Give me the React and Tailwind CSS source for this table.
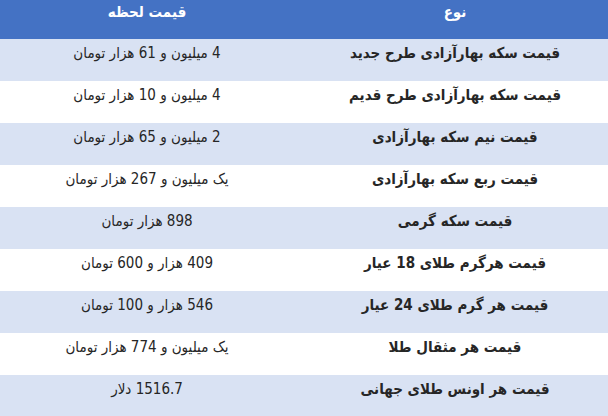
const rows = [
  ['قیمت سکه بهارآزادی طرح جدید', '4 میلیون و 61 هزار تومان'],
  ['قیمت سکه بهارآزادی طرح قدیم', '4 میلیون و 10 هزار تومان'],
  ['قیمت نیم سکه بهارآزادی', '2 میلیون و 65 هزار تومان'],
  ['قیمت ربع سکه بهارآزادی', 'یک میلیون و 267 هزار تومان'],
  ['قیمت سکه گرمی', '898 هزار تومان'],
  ['قیمت هرگرم طلای 18 عیار', '409 هزار و 600 تومان'],
  ['قیمت هر گرم طلای 24 عیار', '546 هزار و 100 تومان'],
  ['قیمت هر مثقال طلا', 'یک میلیون و 774 هزار تومان'],
  ['قیمت هر اونس طلای جهانی', '1516.7 دلار'],
];

export default function App() {
  return (
    <div
      dir="rtl"
      className="w-[608px] h-[416px] overflow-hidden bg-white text-[15px] text-[#262626]"
      style={{ fontFamily: '"DejaVu Sans Condensed", "DejaVu Sans", sans-serif' }}
    >
      {/* header */}
      <div className="grid grid-cols-[314px_294px] h-[39px] bg-[#4472c4] text-white font-bold">
        <div className="text-center pt-[1px] pl-[8px]">نوع</div>
        <div className="text-center pt-[1px]">قیمت لحظه</div>
      </div>
      {rows.map(([name, price], i) => (
        <div
          key={i}
          className={
            'grid grid-cols-[314px_294px] h-[42px] ' +
            (i % 2 === 0 ? 'bg-[#d9e2f3]' : 'bg-white')
          }
        >
          <div className="text-center pt-[3px] pl-[8px] font-semibold">{name}</div>
          <div className="text-center pt-[3px]">{price}</div>
        </div>
      ))}
    </div>
  );
}
